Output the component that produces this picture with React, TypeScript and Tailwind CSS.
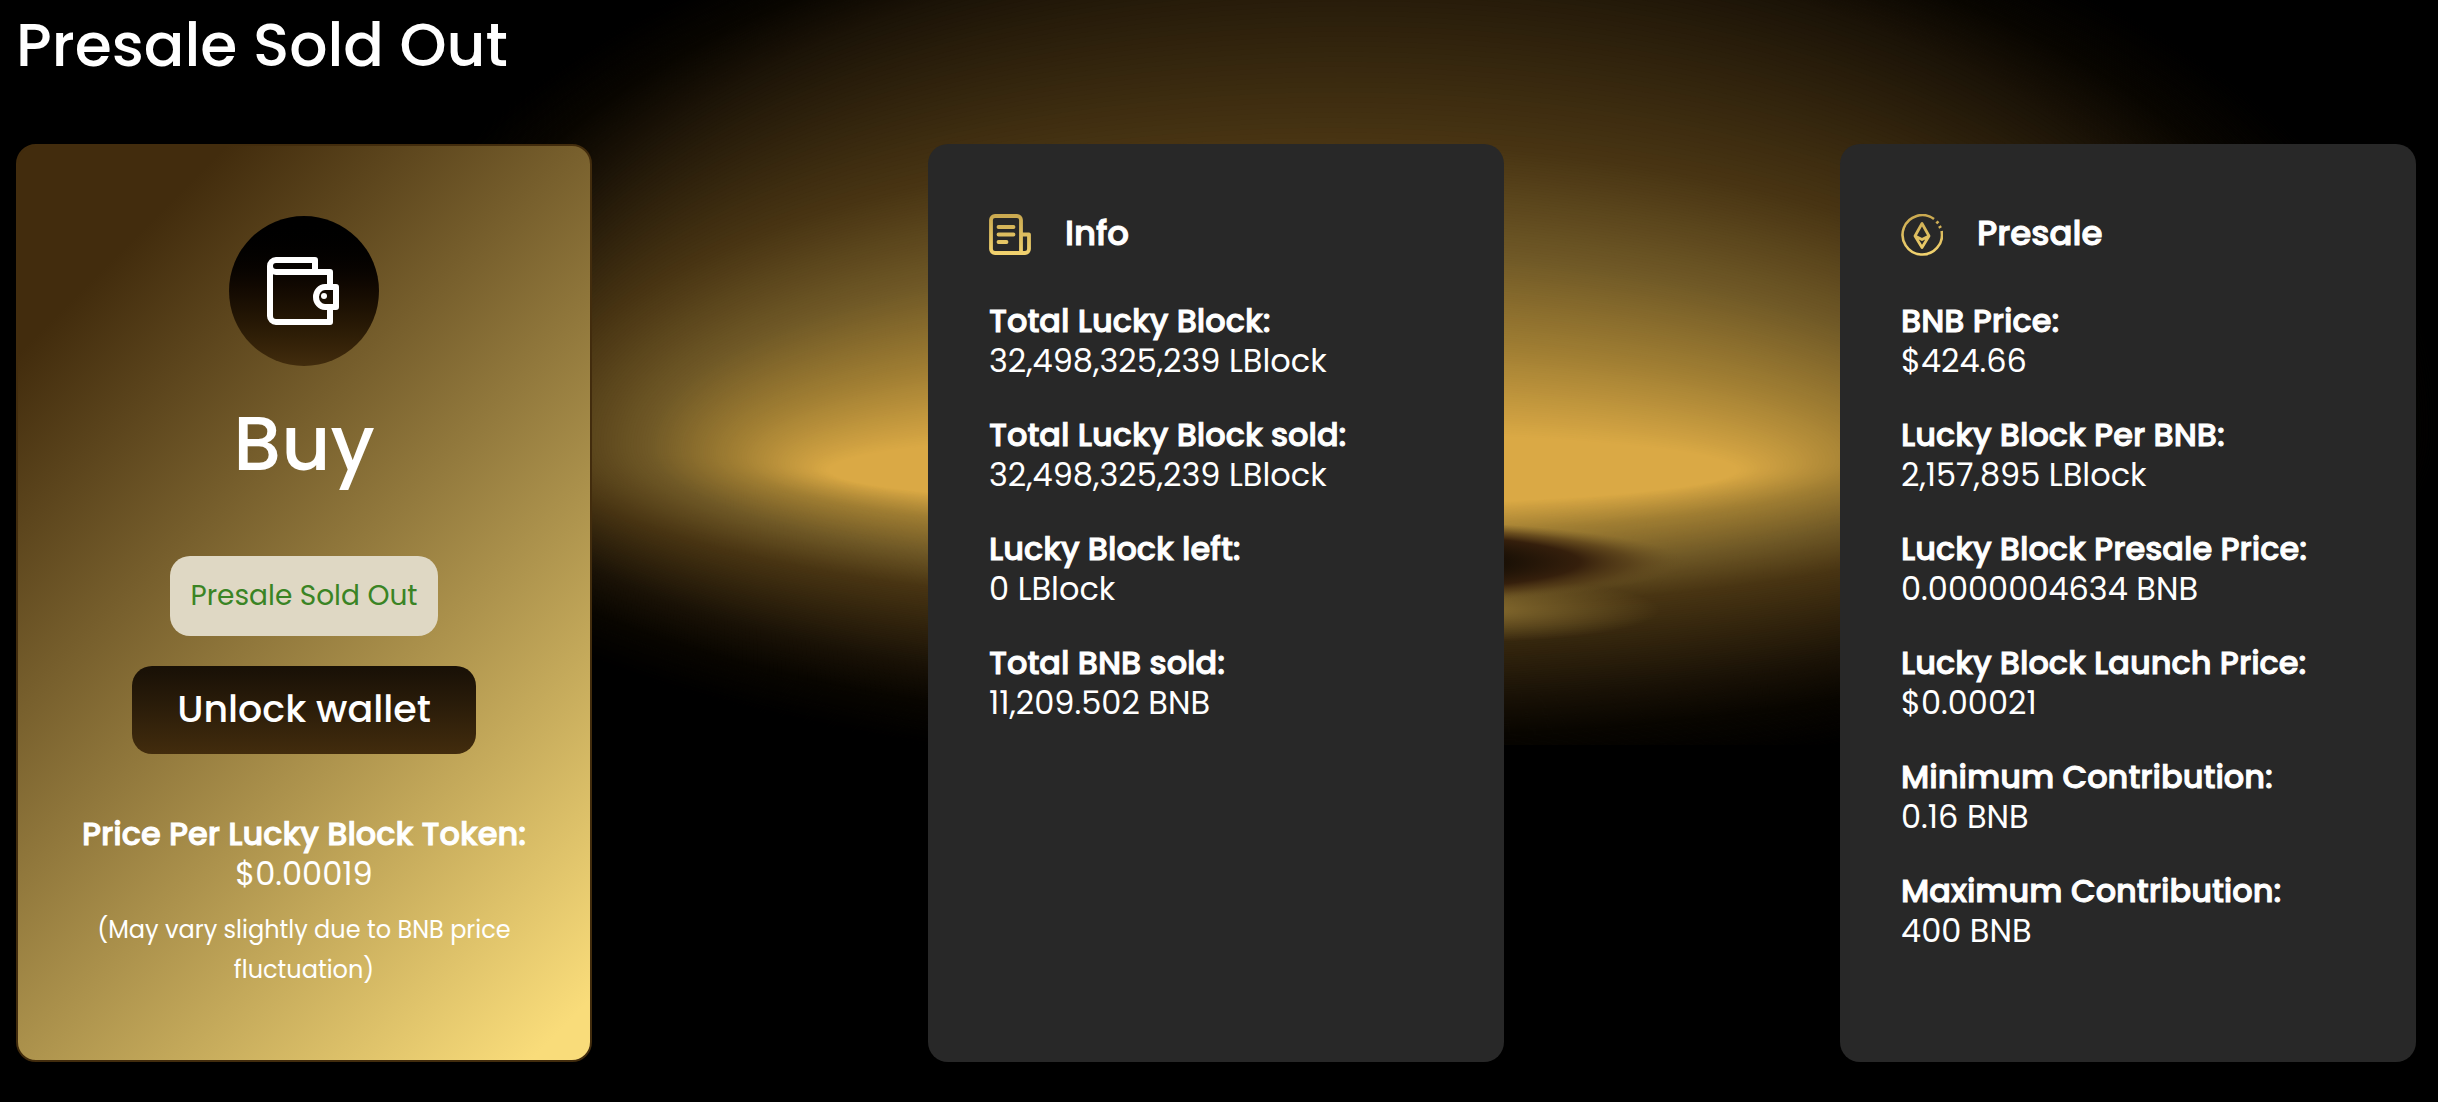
import type { ReactNode } from "react";

type Entry = { label: string; value: string };

const info: Entry[] = [
  { label: "Total Lucky Block:", value: "32,498,325,239 LBlock" },
  { label: "Total Lucky Block sold:", value: "32,498,325,239 LBlock" },
  { label: "Lucky Block left:", value: "0 LBlock" },
  { label: "Total BNB sold:", value: "11,209.502 BNB" },
];

const presale: Entry[] = [
  { label: "BNB Price:", value: "$424.66" },
  { label: "Lucky Block Per BNB:", value: "2,157,895 LBlock" },
  { label: "Lucky Block Presale Price:", value: "0.0000004634 BNB" },
  { label: "Lucky Block Launch Price:", value: "$0.00021" },
  { label: "Minimum Contribution:", value: "0.16 BNB" },
  { label: "Maximum Contribution:", value: "400 BNB" },
];

// rings of the glow, outside in: [cx, cy, rx, height above, height below, r, g, b]
const rings = [
  [1385, 430, 1060, 590, 355, 0, 0, 0],
  [1375, 432, 975, 540, 305, 9, 6, 1],
  [1365, 435, 900, 495, 262, 27, 19, 7],
  [1330, 440, 790, 297, 171, 73, 53, 19],
  [1315, 447, 665, 197, 130, 113, 90, 39],
  [1300, 456, 568, 117, 81, 160, 126, 51],
  [1283, 470, 455, 39, 36, 218, 169, 69],
];

const STEPS = 40;

const glow = rings.slice(0, -1).flatMap((ring, i) =>
  Array.from({ length: STEPS }, (_, s) =>
    ring.map((v, k) => v + ((rings[i + 1][k] - v) * (s + 1)) / STEPS)
  )
);

function Backdrop() {
  return (
    <svg className="absolute inset-x-0 top-0 h-[745px] w-full" viewBox="0 0 2438 745" preserveAspectRatio="none" aria-hidden="true">
      <defs>
        <radialGradient id="shadow">
          <stop offset="0.5" stopColor="#180f05" />
          <stop offset="0.72" stopColor="#351f0c" />
          <stop offset="0.85" stopColor="#4b3213" stopOpacity="0.6" />
          <stop offset="1" stopColor="#6b5323" stopOpacity="0" />
        </radialGradient>
        <radialGradient id="shine">
          <stop offset="0" stopColor="#8f7433" stopOpacity="0.9" />
          <stop offset="1" stopColor="#8f7433" stopOpacity="0" />
        </radialGradient>
      </defs>
      {glow.map(([cx, cy, rx, up, down, r, g, b], i) => (
        <path
          key={i}
          d={`M${cx - rx} ${cy}A${rx} ${up} 0 0 1 ${cx + rx} ${cy}A${rx} ${down} 0 0 1 ${cx - rx} ${cy}Z`}
          fill={`rgb(${r} ${g} ${b})`}
        />
      ))}
      <ellipse cx="1470" cy="610" rx="190" ry="32" fill="url(#shine)" />
      <ellipse cx="1310" cy="562" rx="375" ry="44" fill="url(#shadow)" />
    </svg>
  );
}

function WalletIcon() {
  return (
    <svg className="h-[68px] w-[74px]" viewBox="0 0 74 68" fill="none" stroke="#fff" strokeWidth="6" strokeLinejoin="round" aria-hidden="true">
      <path d="M48 15V3H9a6 6 0 0 0-6 6v50a6 6 0 0 0 6 6h54V51" />
      <path d="M3 9a6 6 0 0 0 6 6h54v15" />
      <path d="M69 30H58a9 10 0 0 0 0 20h11z" />
      <circle cx="57" cy="39" r="3" fill="#fff" stroke="none" />
    </svg>
  );
}

function NewsIcon() {
  return (
    <svg className="size-[42px]" viewBox="0 0 42 42" fill="none" stroke="url(#newsGold)" strokeWidth="3.8" strokeLinecap="round" strokeLinejoin="round" aria-hidden="true">
      <defs>
        <linearGradient id="newsGold" gradientUnits="userSpaceOnUse" x1="0" y1="0" x2="0" y2="42">
          <stop stopColor="#c9a84f" />
          <stop offset="1" stopColor="#f3d470" />
        </linearGradient>
      </defs>
      <path d="M32 39V6a4 4 0 0 0-4-4H6a4 4 0 0 0-4 4v29a4 4 0 0 0 4 4h30a4 4 0 0 0 4-4V20.5h-8" />
      <path d="M9.5 13h15M9.5 20.5h15M9.5 28h8" />
    </svg>
  );
}

function EthIcon() {
  return (
    <svg className="size-[42px]" viewBox="0 0 42 42" fill="none" stroke="url(#ethGold)" strokeWidth="2.6" aria-hidden="true">
      <defs>
        <linearGradient id="ethGold" gradientUnits="userSpaceOnUse" x1="0" y1="0" x2="0" y2="42">
          <stop stopColor="#c9a84f" />
          <stop offset="1" stopColor="#f3d470" />
        </linearGradient>
      </defs>
      <path d="M33 5A19.700 19.700 0 1 0 40.600 17" />
      <path d="M35.500 7.500l1.800 1.800M38.500 12l1 2" strokeWidth="3" />
      <path d="M21 9.500l-7 12.500L21 33.500l7-11.500zM14 22l7 3.500 7-3.500" strokeWidth="2.8" strokeLinejoin="round" />
    </svg>
  );
}

function InfoCard({ icon, title, entries }: { icon: ReactNode; title: string; entries: Entry[] }) {
  return (
    <section className="w-[24%] rounded-[20px] bg-[#282828] px-[61px] pt-[66px] pb-20">
      <div className="flex items-start gap-[34px]">
        <span className="pt-1">{icon}</span>
        <h2 className="text-[34px] leading-[46px] font-medium [-webkit-text-stroke:0.03em]">{title}</h2>
      </div>
      <dl className="mt-[45px] flex flex-col gap-[34px] text-[32px] leading-10">
        {entries.map((entry) => (
          <div key={entry.label} className="whitespace-nowrap">
            <dt className="font-medium [-webkit-text-stroke:0.03em]">{entry.label}</dt>
            <dd>{entry.value}</dd>
          </div>
        ))}
      </dl>
    </section>
  );
}

function BuyCard() {
  return (
    <section className="flex w-[24%] flex-col items-center rounded-[20px] border-2 border-[#422c0d] bg-[linear-gradient(135deg,#422c0d_14%,#f9dc7a_96%)] px-10 pt-[70px] pb-[70px] text-center">
      <div className="flex size-[150px] items-center justify-center rounded-full bg-linear-to-b from-black to-[#422c0d]">
        <WalletIcon />
      </div>
      <h2 className="mt-[30px] text-[76px] leading-[96px] font-medium">Buy</h2>
      <p className="mt-16 flex h-20 items-center rounded-[20px] bg-[#dfd8c4] px-5 text-[28px] text-[#3a8424]">Presale Sold Out</p>
      <button type="button" className="mt-[30px] h-22 w-[344px] rounded-[20px] bg-linear-to-b from-[#181006] to-[#422c0d] pb-1 text-[38px] font-medium">
        Unlock wallet
      </button>
      <p className="mt-[60px] text-[32px] leading-10 whitespace-nowrap">
        <strong className="font-medium [-webkit-text-stroke:0.03em]">Price Per Lucky Block Token:</strong>
        <br />
        $0.00019
      </p>
      <p className="mt-4 text-2xl leading-10">(May vary slightly due to BNB price fluctuation)</p>
    </section>
  );
}

export default function App() {
  return (
    <main className="relative min-h-screen bg-black font-['Poppins','Inter',sans-serif] text-white">
      <Backdrop />
      <div className="relative pt-[7px] pr-[22px] pb-10 pl-4">
        <h1 className="text-[60px] leading-[76px] font-medium">Presale Sold Out</h1>
        <div className="mt-[61px] flex justify-between">
          <BuyCard />
          <InfoCard icon={<NewsIcon />} title="Info" entries={info} />
          <InfoCard icon={<EthIcon />} title="Presale" entries={presale} />
        </div>
      </div>
    </main>
  );
}
